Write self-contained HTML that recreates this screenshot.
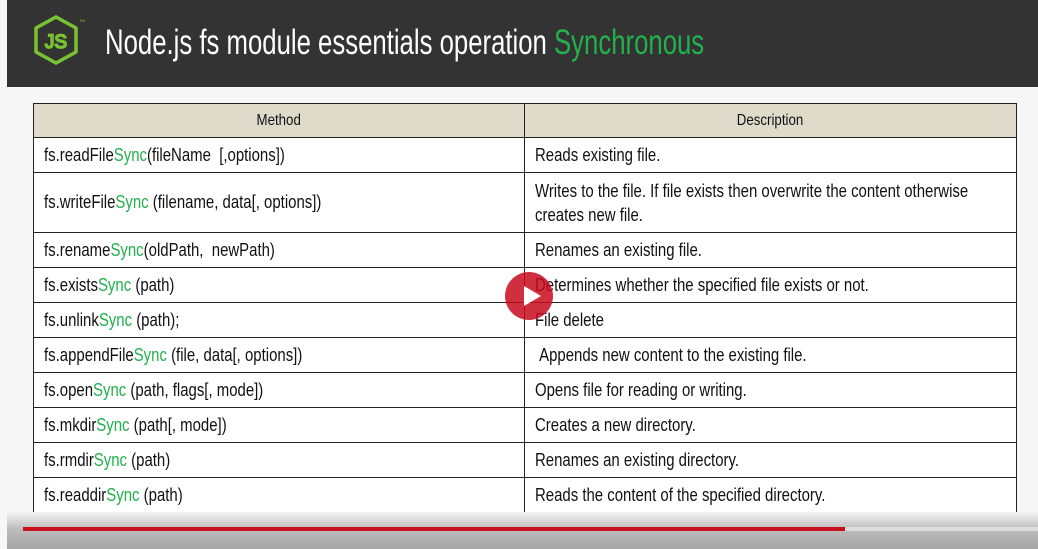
<!DOCTYPE html>
<html><head><style>
*{margin:0;padding:0;box-sizing:border-box}
body{width:1038px;height:549px;background:#f7f7f7;position:relative;overflow:hidden;font-family:"Liberation Sans",sans-serif}
.hdr{position:absolute;left:7px;top:0;width:1031px;height:87px;background:#333333}
.title{position:absolute;left:98px;top:23px;font-size:35px;color:#fff;white-space:nowrap;transform:scaleX(0.735);transform-origin:left top}
.title span{color:#22b14c}
table{position:absolute;left:33px;top:103px;width:983px;table-layout:fixed;border-collapse:collapse;background:#fff;font-size:18px;color:#111}
td,th{border:1.5px solid #222;padding:0 10px;text-align:left;font-weight:normal;height:35px;white-space:nowrap;overflow:visible}
th{background:#dedbcb;text-align:center;height:34px;font-size:16px}
th i{font-style:normal;display:inline-block;transform:scaleX(.83)}
td i{font-style:normal;display:inline-block;transform:scaleX(.83);transform-origin:left center}
.s{color:#22b14c}
.bot{position:absolute;left:7px;top:512px;width:1031px;height:37px;background:linear-gradient(#f4f4f4,#bdbdbd 45%,#a5a5a5)}
.track{position:absolute;left:23px;top:527px;width:1015px;height:4px;background:#ddd}
.prog{position:absolute;left:23px;top:527px;width:822px;height:4px;background:#c8101e}
.play{position:absolute;left:505px;top:272px;width:48px;height:48px;border-radius:50%;background:rgba(200,10,30,.85)}
.play:after{content:"";position:absolute;left:19px;top:14px;border-left:17px solid #fff;border-top:10px solid transparent;border-bottom:10px solid transparent}
</style></head><body>
<div class="hdr">
<svg style="position:absolute;left:26px;top:14px" width="56" height="56" viewBox="0 0 56 56">
<polygon points="23,3 43,14 43,38 23,49 3,38 3,14" fill="none" stroke="#7ac231" stroke-width="3.5"/>
<text x="23" y="34" text-anchor="middle" font-family="Liberation Sans" font-size="19" fill="none" stroke="#7ac231" stroke-width="1.7">JS</text>
<text x="46" y="8" font-size="4" fill="#7ac231" font-family="Liberation Sans">TM</text>
</svg>
<div class="title">Node.js fs module essentials operation <span>Synchronous</span></div>
</div>
<table>
<colgroup><col style="width:491px"><col style="width:492px"></colgroup>
<tr><th><i>Method</i></th><th><i>Description</i></th></tr>
<tr><td><i>fs.readFile<span class="s">Sync</span>(fileName &nbsp;[,options])</i></td><td><i>Reads existing file.</i></td></tr>
<tr><td style="height:60px"><i>fs.writeFile<span class="s">Sync</span> (filename, data[, options])</i></td><td style="line-height:24px"><i>Writes to the file. If file exists then overwrite the content otherwise<br>creates new file.</i></td></tr>
<tr><td><i>fs.rename<span class="s">Sync</span>(oldPath, &nbsp;newPath)</i></td><td><i>Renames an existing file.</i></td></tr>
<tr><td><i>fs.exists<span class="s">Sync</span> (path)</i></td><td><i>Determines whether the specified file exists or not.</i></td></tr>
<tr><td><i>fs.unlink<span class="s">Sync</span> (path);</i></td><td><i>File delete</i></td></tr>
<tr><td><i>fs.appendFile<span class="s">Sync</span> (file, data[, options])</i></td><td><i>&nbsp;Appends new content to the existing file.</i></td></tr>
<tr><td><i>fs.open<span class="s">Sync</span> (path, flags[, mode])</i></td><td><i>Opens file for reading or writing.</i></td></tr>
<tr><td><i>fs.mkdir<span class="s">Sync</span> (path[, mode])</i></td><td><i>Creates a new directory.</i></td></tr>
<tr><td><i>fs.rmdir<span class="s">Sync</span> (path)</i></td><td><i>Renames an existing directory.</i></td></tr>
<tr><td><i>fs.readdir<span class="s">Sync</span> (path)</i></td><td><i>Reads the content of the specified directory.</i></td></tr>
</table>
<div class="bot"></div>
<div class="track"></div><div class="prog"></div>
<div class="play"></div>
</body></html>
